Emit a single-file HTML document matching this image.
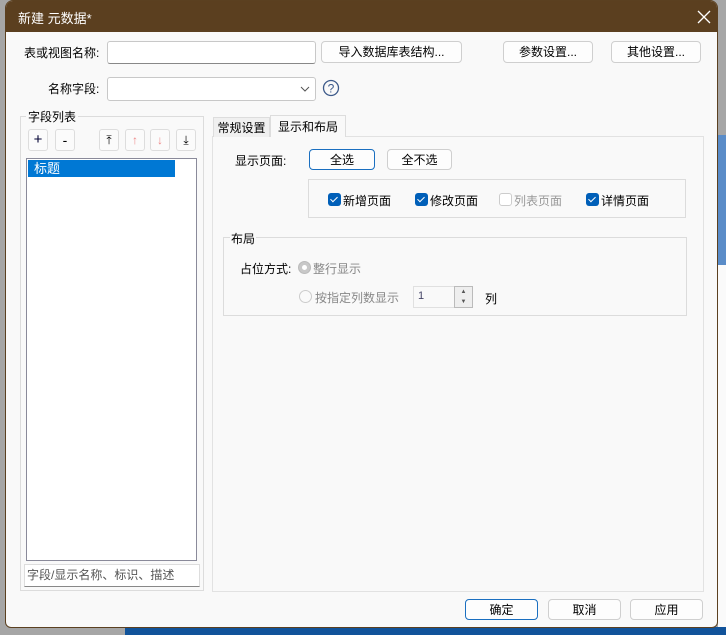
<!DOCTYPE html>
<html><head><meta charset="utf-8"><style>
*{box-sizing:border-box;margin:0;padding:0}
body{width:726px;height:635px;overflow:hidden;background:#a6a6a6;position:relative;font-family:"Liberation Sans","Noto Sans CJK SC",sans-serif;font-size:12px;color:#000}
.a{position:absolute}
.dlg{left:5px;top:0;width:713px;height:628px;background:#f9f9f9;border:1px solid #5b4020;border-radius:8px 8px 6px 6px;overflow:hidden}
.title{left:0;top:0;width:100%;height:31px;background:#5b3f1f;color:#fff}
.btn{position:absolute;background:#fdfdfd;border:1px solid #cfcfcf;border-radius:4px;text-align:center;line-height:20px;font-size:12px}
.inp{position:absolute;background:#fff;border:1px solid #c8c8c8;border-bottom:1px solid #888;border-radius:3px}
.cb{position:absolute;width:13px;height:13px;border-radius:3px;background:#005fb8}
.cb:after{content:"";position:absolute;left:4px;top:2px;width:3px;height:6px;border:solid #fff;border-width:0 1px 1px 0;transform:rotate(45deg)}
.sb{position:absolute;width:20px;height:22px;border:1px solid #ddd;border-radius:3px;background:#fbfbfb;font-size:12px;text-align:center;line-height:20px}
</style></head><body>
<div class="a" style="left:718px;top:135px;width:8px;height:130px;background:#5a8cc8"></div>
<div class="a" style="left:718px;top:265px;width:8px;height:370px;background:#fafafa"></div>
<div class="a" style="left:125px;top:627px;width:601px;height:8px;background:#11539a"></div>
<div class="a dlg">
 <div class="a title"><span class="a" style="left:12px;top:7px;font-size:13px">新建 元数据*</span>
  <svg class="a" style="left:691px;top:9px" width="14" height="14"><path d="M1 1L13 13M13 1L1 13" stroke="#fff" stroke-width="1.3"/></svg></div>
</div>
<div class="a" style="left:24px;top:44px">表或视图名称:</div>
<div class="inp" style="left:107px;top:41px;width:209px;height:23px"></div>
<div class="btn" style="left:321px;top:41px;width:141px;height:22px">导入数据库表结构...</div>
<div class="btn" style="left:503px;top:41px;width:90px;height:22px">参数设置...</div>
<div class="btn" style="left:611px;top:41px;width:90px;height:22px">其他设置...</div>
<div class="a" style="left:48px;top:80px">名称字段:</div>
<div class="inp" style="left:107px;top:77px;width:209px;height:24px;border-bottom-color:#c8c8c8"></div>
<svg class="a" style="left:300px;top:86px" width="10" height="6"><path d="M1 1L5 5L9 1" fill="none" stroke="#555"/></svg>
<svg class="a" style="left:322px;top:79px" width="18" height="18"><circle cx="9" cy="9" r="7.5" fill="none" stroke="#3d5a8a" stroke-width="1.3"/><text x="9" y="13.5" font-size="12" text-anchor="middle" fill="#3d5a8a" font-family="Liberation Sans">?</text></svg>
<div class="a" style="left:20px;top:116px;width:184px;height:475px;border:1px solid #dcdcdc"></div>
<div class="a" style="left:26px;top:108px;background:#f9f9f9;padding:0 2px">字段列表</div>
<div class="sb" style="left:28px;top:129px;font-size:15px;color:#003">+</div>
<div class="sb" style="left:55px;top:129px;font-size:14px">-</div>
<div class="sb" style="left:99px;top:129px">⤒</div>
<div class="sb" style="left:125px;top:129px;color:#e88">↑</div>
<div class="sb" style="left:150px;top:129px;color:#e88">↓</div>
<div class="sb" style="left:176px;top:129px">⤓</div>
<div class="a" style="left:26px;top:158px;width:171px;height:403px;background:#fff;border:1px solid #8a8a9a"></div>
<div class="a" style="left:28px;top:160px;width:147px;height:17px;background:#0078d4;color:#fff;padding-left:6px;line-height:17px;font-size:13px">标题</div>
<div class="a" style="left:24px;top:564px;width:176px;height:23px;background:#fff;border:1px solid #ddd;border-bottom-color:#888;color:#555;padding-left:2px;line-height:21px">字段/显示名称、标识、描述</div>
<div class="a" style="left:212px;top:136px;width:492px;height:456px;border:1px solid #e2e2e2;background:#f9f9f9"></div>
<div class="a" style="left:213px;top:117px;width:57px;height:20px;border:1px solid #ddd;border-bottom:none;background:#f0f0f0;text-align:center;line-height:20px">常规设置</div>
<div class="a" style="left:270px;top:115px;width:76px;height:22px;border:1px solid #ddd;border-bottom:none;background:#f9f9f9;text-align:center;line-height:22px">显示和布局</div>
<div class="a" style="left:235px;top:152px">显示页面:</div>
<div class="btn" style="left:309px;top:149px;width:66px;height:21px;border-color:#1a6fc0">全选</div>
<div class="btn" style="left:387px;top:149px;width:65px;height:21px">全不选</div>
<div class="a" style="left:308px;top:179px;width:378px;height:39px;border:1px solid #dcdcdc"></div>
<div class="cb" style="left:328px;top:193px"></div><div class="a" style="left:343px;top:192px">新增页面</div>
<div class="cb" style="left:415px;top:193px"></div><div class="a" style="left:430px;top:192px">修改页面</div>
<div class="a" style="left:499px;top:193px;width:13px;height:13px;border:1px solid #ccc;border-radius:3px;background:#fff"></div><div class="a" style="left:514px;top:192px;color:#999">列表页面</div>
<div class="cb" style="left:586px;top:193px"></div><div class="a" style="left:601px;top:192px">详情页面</div>
<div class="a" style="left:223px;top:237px;width:464px;height:79px;border:1px solid #dcdcdc"></div>
<div class="a" style="left:230px;top:230px;background:#f9f9f9;padding:0 1px">布局</div>
<div class="a" style="left:240px;top:260px">占位方式:</div>
<div class="a" style="left:298px;top:261px;width:13px;height:13px;border-radius:50%;background:#c8c8c8;border:1px solid #bbb"><div class="a" style="left:3px;top:3px;width:5px;height:5px;border-radius:50%;background:#fff"></div></div>
<div class="a" style="left:313px;top:260px;color:#888">整行显示</div>
<div class="a" style="left:299px;top:290px;width:13px;height:13px;border-radius:50%;border:1px solid #ccc;background:#fafafa"></div>
<div class="a" style="left:315px;top:289px;color:#888">按指定列数显示</div>
<div class="a" style="left:413px;top:286px;width:60px;height:22px;border:1px solid #e0e0e0;background:#f9f9f9;font-size:11px;color:#446;padding:3px 4px">1</div>
<div class="a" style="left:454px;top:286px;width:19px;height:22px;border:1px solid #bbb;background:#eee"><div style="font-size:6px;line-height:10px;text-align:center;color:#555">▲<br>▼</div></div>
<div class="a" style="left:485px;top:290px">列</div>
<div class="btn" style="left:465px;top:599px;width:73px;height:21px;border-color:#1a6fc0">确定</div>
<div class="btn" style="left:548px;top:599px;width:73px;height:21px">取消</div>
<div class="btn" style="left:630px;top:599px;width:73px;height:21px">应用</div>
</body></html>
